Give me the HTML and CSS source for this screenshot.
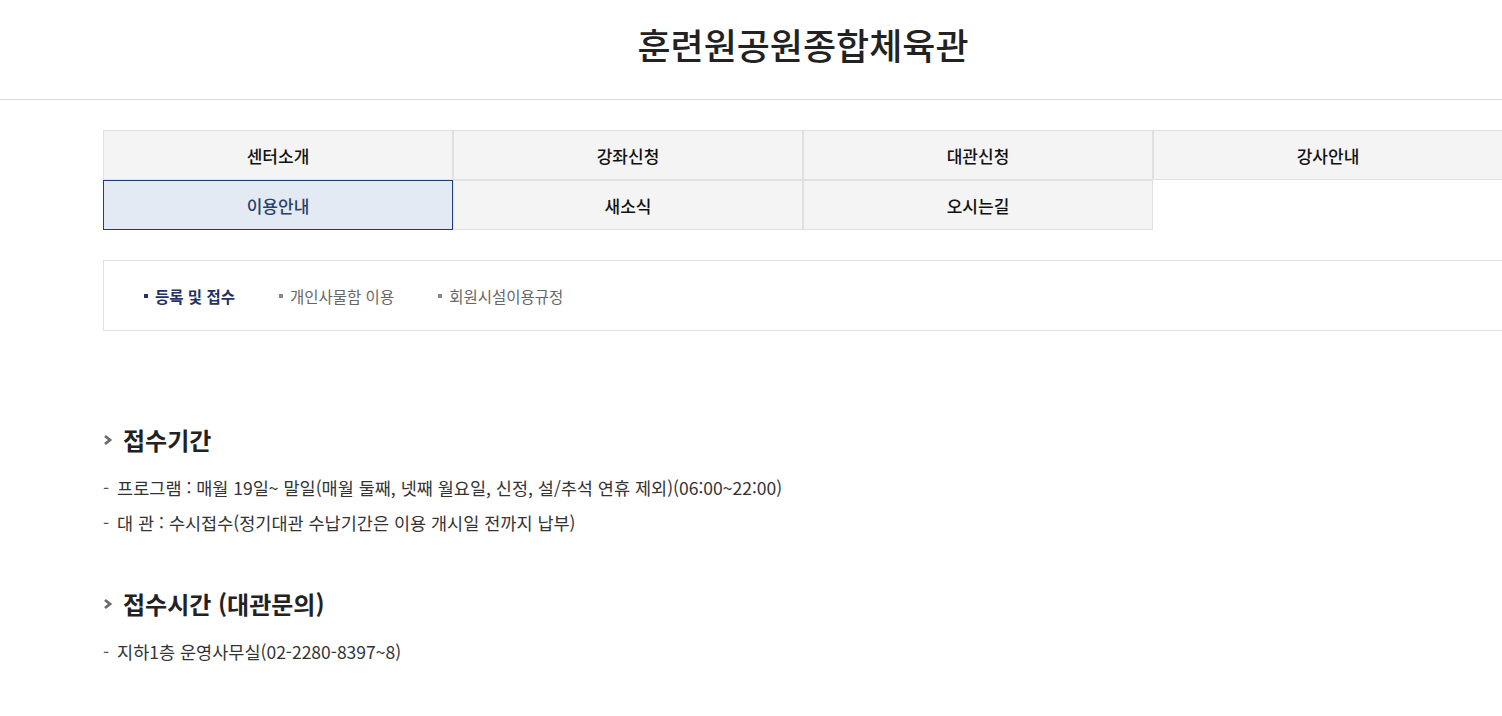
FILE: index.html
```html
<!DOCTYPE html>
<html lang="ko">

<head>
    <meta charset="UTF-8">
    <meta name="viewport" content="width=device-width, initial-scale=1.0">
    <title>훈련원공원종합체육관 - 이용안내</title>
    <link rel="stylesheet" href="styles.css">
</head>

<body>
    <header class="site-header">
        <h1 class="site-title">훈련원공원종합체육관</h1>
    </header>

    <main class="container">
        <nav class="tabs">
            <a class="tab" href="#">센터소개</a>
            <a class="tab" href="#">강좌신청</a>
            <a class="tab" href="#">대관신청</a>
            <a class="tab" href="#">강사안내</a>
            <a class="tab active" href="#">이용안내</a>
            <a class="tab" href="#">새소식</a>
            <a class="tab" href="#">오시는길</a>
        </nav>

        <ul class="sub-menu">
            <li class="sub-item current"><a href="#">등록 및 접수</a></li>
            <li class="sub-item"><a href="#">개인사물함 이용</a></li>
            <li class="sub-item"><a href="#">회원시설이용규정</a></li>
        </ul>

        <section class="info">
            <h2 class="info-title">
                <svg class="chevron" width="10" height="12" viewBox="0 0 10 12">
                    <polyline points="2,2 7,6 2,10" fill="none" stroke="#6b6b6b" stroke-width="2.8" />
                </svg>
                접수기간
            </h2>
            <ul class="info-list">
                <li>프로그램 : 매월 19일~ 말일(매월 둘째, 넷째 월요일, 신정, 설/추석 연휴 제외)(06:00~22:00)</li>
                <li>대 관 : 수시접수(정기대관 수납기간은 이용 개시일 전까지 납부)</li>
            </ul>
        </section>

        <section class="info">
            <h2 class="info-title">
                <svg class="chevron" width="10" height="12" viewBox="0 0 10 12">
                    <polyline points="2,2 7,6 2,10" fill="none" stroke="#6b6b6b" stroke-width="2.8" />
                </svg>
                접수시간 (대관문의)
            </h2>
            <ul class="info-list">
                <li>지하1층 운영사무실(02-2280-8397~8)</li>
            </ul>
        </section>
    </main>
</body>

</html>
```

FILE: styles.css
```css
body {
    font-family: 'Noto Sans CJK KR', 'Noto Sans', sans-serif;
    margin: 0;
    padding: 0;
    background-color: #fff;
    color: #222;
    overflow-x: hidden;
}

a {
    color: inherit;
    text-decoration: none;
}

ul {
    list-style: none;
    margin: 0;
    padding: 0;
}

.site-header {
    height: 99px;
    border-bottom: 1px solid #dcdcdc;
}

.site-title {
    width: 1400px;
    margin: 0 0 0 103px;
    text-align: center;
    font-size: 36px;
    font-weight: 500;
    line-height: 88px;
    color: #222;
}

.container {
    width: 1400px;
    margin-left: 103px;
    padding-top: 30px;
}

/* main tabs */
.tabs {
    display: grid;
    grid-template-columns: repeat(4, 350px);
}

.tab {
    box-sizing: border-box;
    height: 50px;
    display: flex;
    align-items: center;
    justify-content: center;
    border: 1px solid #e0e0e0;
    background-color: #f4f4f4;
    font-size: 17px;
    font-weight: 500;
    color: #111;
}

.tab.active {
    border-color: #1f3d7a;
    background-color: #e3eaf3;
    color: #2b3f6c;
}

/* sub menu */
.sub-menu {
    box-sizing: border-box;
    height: 71px;
    margin-top: 30px;
    border: 1px solid #e0e0e0;
    display: flex;
    align-items: center;
    padding-left: 40px;
    gap: 44px;
}

.sub-item {
    display: flex;
    align-items: center;
    font-size: 15.5px;
    color: #666;
}

.sub-item::before {
    content: '';
    width: 4px;
    height: 4px;
    margin-right: 7px;
    background-color: #888;
}

.sub-item.current {
    color: #1f3366;
    font-weight: 700;
}

.sub-item.current::before {
    background-color: #1f3366;
}

/* info sections */
.info {
    margin-top: 93px;
}

.info + .info {
    margin-top: 48px;
}

.info-title {
    display: flex;
    align-items: center;
    margin: 0 0 14px;
    font-size: 24px;
    font-weight: 700;
    line-height: 32px;
    color: #222;
}

.chevron {
    margin-right: 10px;
}

.info-list li {
    font-size: 17.5px;
    line-height: 35px;
    color: #333;
}

.info-list li::before {
    content: '-';
    margin-right: 8px;
    color: #555;
}
```
